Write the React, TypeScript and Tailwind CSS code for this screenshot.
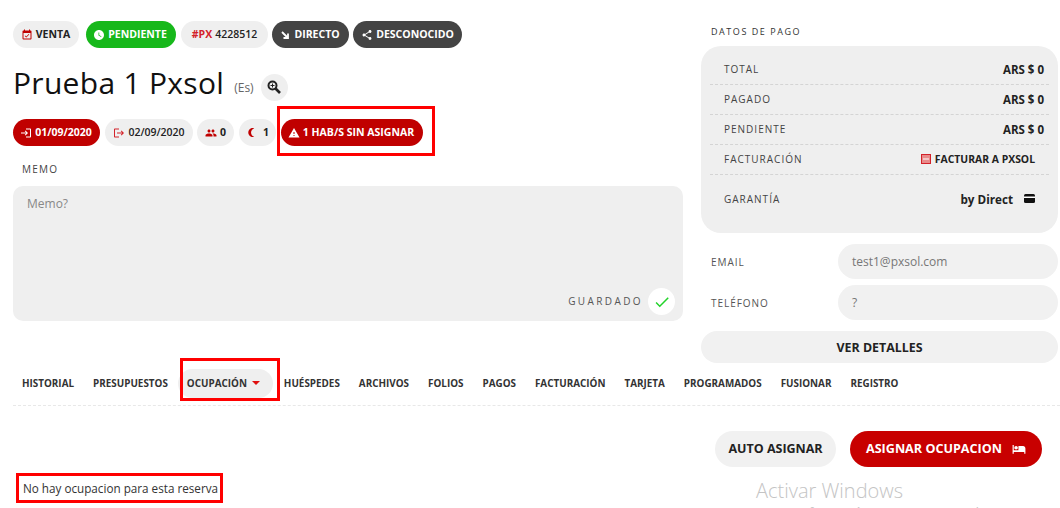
import {
  MdBrightness3,
  MdCheck,
  MdEventAvailable,
  MdHotel,
  MdLogin,
  MdLogout,
  MdPeople,
  MdShare,
  MdWarning,
  MdWatchLater,
} from 'react-icons/md';
import type { ReactNode } from 'react';

function Pill({ className, children }: { className: string; children: ReactNode }) {
  return (
    <div className={`flex h-[27px] items-center justify-center gap-[3px] rounded-full text-[10.5px] font-bold ${className}`}>
      {children}
    </div>
  );
}

function PayRow({ label, children }: { label: string; children: ReactNode }) {
  return (
    <div className="flex h-[30px] items-center justify-between border-b border-dashed border-[#d4d4d4] pl-[14px] pr-[5px]">
      <span className="text-[10px] tracking-[1px] text-[#444]">{label}</span>
      {children}
    </div>
  );
}

const tabsBefore = ['HISTORIAL', 'PRESUPUESTOS'];
const tabsAfter = ['ARCHIVOS', 'FOLIOS', 'PAGOS', 'FACTURACIÓN', 'TARJETA', 'PROGRAMADOS', 'FUSIONAR', 'REGISTRO'];

export default function App() {
  return (
    <div className="relative h-[508px] w-[1060px] overflow-hidden bg-white font-['Open_Sans',sans-serif] text-[#222]">
      <div className="flex pl-[13px] pt-[21px]">
        <div className="w-[670px]">
          <div className="flex">
            <Pill className="w-[66px] pr-[1px] bg-[#efefef]">
              <MdEventAvailable size={12} className="text-[#c00000]" /> VENTA
            </Pill>
            <Pill className="ml-[7px] w-[90px] pr-[2px] bg-[#17b81b] text-white">
              <MdWatchLater size={12} /> PENDIENTE
            </Pill>
            <Pill className="ml-[5px] w-[87px] bg-[#efefef] font-semibold">
              <span className="font-bold text-[#d3222a]">#PX</span> 4228512
            </Pill>
            <Pill className="ml-[4px] w-[77px] gap-[5px] bg-[#444] text-white">
              <svg width="8" height="8" viewBox="0 0 8 8" fill="none" stroke="currentColor" strokeWidth="1.8">
                <path d="M1 1l5 5M7 2.5V7H2.5" />
              </svg>
              DIRECTO
            </Pill>
            <Pill className="ml-[4px] w-[109px] bg-[#444] text-white">
              <MdShare size={12} /> DESCONOCIDO
            </Pill>
          </div>

          <div className="mt-[20px] flex h-[30px] items-center">
            <h1 className="text-[30px] leading-[30px] tracking-[0.3px] text-[#111]">Prueba 1 Pxsol</h1>
            <span className="ml-[10px] mt-[9px] text-[12px] text-[#666]">(Es)</span>
            <div className="ml-[7px] mt-[8px] flex h-[27px] w-[27px] shrink-0 items-center justify-center rounded-full bg-[#efefef]">
              <svg width="14" height="14" viewBox="0 0 14 14" fill="none" stroke="#222">
                <circle cx="5.5" cy="5.5" r="4" strokeWidth="2" />
                <path d="M8.5 8.5L13 13" strokeWidth="2.6" />
                <path d="M3.5 5.5h4M5.5 3.5v4" strokeWidth="1" />
              </svg>
            </div>
          </div>

          <div className="mt-[21px] flex">
            <Pill className="w-[87px] pr-[1px] bg-[#c00000] text-white">
              <MdLogin size={12} /> 01/09/2020
            </Pill>
            <Pill className="ml-[5px] w-[88px] bg-[#efefef] font-semibold">
              <MdLogout size={12} className="text-[#d3222a]" /> 02/09/2020
            </Pill>
            <Pill className="ml-[4px] w-[37px] bg-[#efefef]">
              <MdPeople size={12} className="text-[#c00000]" /> 0
            </Pill>
            <Pill className="ml-[5px] w-[37px] gap-[6px] bg-[#efefef]">
              <MdBrightness3 size={11} className="-scale-x-100 text-[#c00000]" /> 1
            </Pill>
            <Pill className="ml-[5px] w-[142px] pr-[2px] bg-[#c00000] text-white">
              <MdWarning size={12} /> 1 HAB/S SIN ASIGNAR
            </Pill>
          </div>

          <div className="ml-[9px] mt-[16px] text-[10px] leading-[14px] tracking-[1.2px] text-[#444]">MEMO</div>

          <div className="mt-[10px] flex h-[135px] flex-col justify-between rounded-[10px] bg-[#efefef] pb-[6px] pl-[14px] pr-[8px] pt-[9px]">
            <div className="text-[12px] text-[#888]">Memo?</div>
            <div className="flex items-center justify-end gap-[5px]">
              <span className="text-[10px] tracking-[2.4px] text-[#555]">GUARDADO</span>
              <div className="flex h-[27px] w-[27px] items-center justify-center rounded-full bg-white">
                <MdCheck size={18} className="text-[#22d32a]" />
              </div>
            </div>
          </div>
        </div>

        <div className="ml-[18px] w-[357px]">
          <div className="ml-[10px] mt-[4px] text-[9px] leading-[13px] tracking-[1.55px] text-[#333]">DATOS DE PAGO</div>
          <div className="mt-[8px] h-[187px] rounded-[20px] bg-[#efefef] px-[9px] pt-[9px]">
            <PayRow label="TOTAL"><span className="text-[11.5px] font-bold">ARS $ 0</span></PayRow>
            <PayRow label="PAGADO"><span className="text-[11.5px] font-bold">ARS $ 0</span></PayRow>
            <PayRow label="PENDIENTE"><span className="text-[11.5px] font-bold">ARS $ 0</span></PayRow>
            <PayRow label="FACTURACIÓN">
              <span className="mr-[9px] flex items-center gap-[4px] text-[10.4px] font-bold">
                <svg width="10" height="10" viewBox="0 0 10 10">
                  <rect x="0.5" y="0.5" width="9" height="9" fill="#e88a8a" stroke="#d3222a" />
                  <rect x="2" y="4.5" width="6" height="1" fill="#fff" />
                </svg>
                FACTURAR A PXSOL
              </span>
            </PayRow>
            <div className="flex h-[50px] items-center justify-between pb-[1px] pl-[14px] pr-[14px]">
              <span className="text-[10px] tracking-[1px] text-[#444]">GARANTÍA</span>
              <span className="flex items-center gap-[11px] text-[11.7px] font-bold">
                by Direct
                <svg width="11" height="9" viewBox="0 0 11 9" className="mb-[2px]">
                  <rect width="11" height="9" rx="1.5" fill="#111" />
                  <rect y="2.5" width="11" height="1.5" fill="#fff" />
                </svg>
              </span>
            </div>
          </div>

          <div className="mt-[11px] flex h-[35px] items-center">
            <span className="ml-[10px] w-[127px] pt-[1px] text-[10px] tracking-[0.95px] text-[#555]">EMAIL</span>
            <div className="flex h-full flex-1 items-center rounded-full bg-[#f1f1f1] pl-[14px] text-[12px] text-[#777]">test1@pxsol.com</div>
          </div>
          <div className="mt-[6px] flex h-[35px] items-center">
            <span className="ml-[10px] w-[127px] pt-[1px] text-[10px] tracking-[0.95px] text-[#555]">TELÉFONO</span>
            <div className="flex h-full flex-1 items-center rounded-full bg-[#f1f1f1] pl-[14px] text-[12px] text-[#777]">?</div>
          </div>
          <div className="mt-[11px] flex h-[32px] items-center justify-center rounded-full bg-[#f1f1f1] pt-[2px] text-[12.4px] font-bold">VER DETALLES</div>
        </div>
      </div>

      <div className="ml-[13px] mt-[2px] flex h-[41px] items-center gap-[19px] border-b border-dashed border-[#e8e8e8] pb-[4px] pl-[9px] text-[9.9px] font-bold text-[#333]">
        {tabsBefore.map((t) => (
          <span key={t}>{t}</span>
        ))}
        <span className="-ml-[9px] -mr-[8px] flex h-[29px] w-[95px] shrink-0 items-center gap-[5px] rounded-full bg-[#efefef] pl-[9px]">
          OCUPACIÓN <span className="h-0 w-0 border-x-[4px] border-t-[4px] border-x-transparent border-t-[#e01010]" />
        </span>
        <span>HUÉSPEDES</span>
        {tabsAfter.map((t) => (
          <span key={t}>{t}</span>
        ))}
      </div>

      <div className="mr-[18px] mt-[25px] flex justify-end gap-[14px]">
        <div className="flex h-[36px] w-[121px] items-center justify-center rounded-full bg-[#f1f1f1] text-[12.5px] font-bold">AUTO ASIGNAR</div>
        <div className="flex h-[36px] w-[192px] items-center justify-center gap-[10px] rounded-full bg-[#c80000] text-[12.6px] font-bold text-white">
          ASIGNAR OCUPACION <MdHotel size={14} />
        </div>
      </div>

      <div className="ml-[23px] mt-[13px] text-[11.7px] leading-[16px] text-[#333]">No hay ocupacion para esta reserva</div>

      <div className="absolute left-[277px] top-[106px] h-[50px] w-[158px] border-[3px] border-[#ff0000]" />
      <div className="absolute left-[180px] top-[358px] h-[43px] w-[100px] border-[3px] border-[#ff0000]" />
      <div className="absolute left-[16px] top-[473px] h-[30px] w-[207px] border-[3px] border-[#ff0000]" />

      <div className="absolute left-[756px] top-[476px] text-[20px] font-light text-[#c4c4c4]">Activar Windows</div>
      <div className="absolute left-[756px] top-[503px] text-[13px] text-[#c4c4c4]">Ve a Configuración para activar Windows.</div>
    </div>
  );
}
